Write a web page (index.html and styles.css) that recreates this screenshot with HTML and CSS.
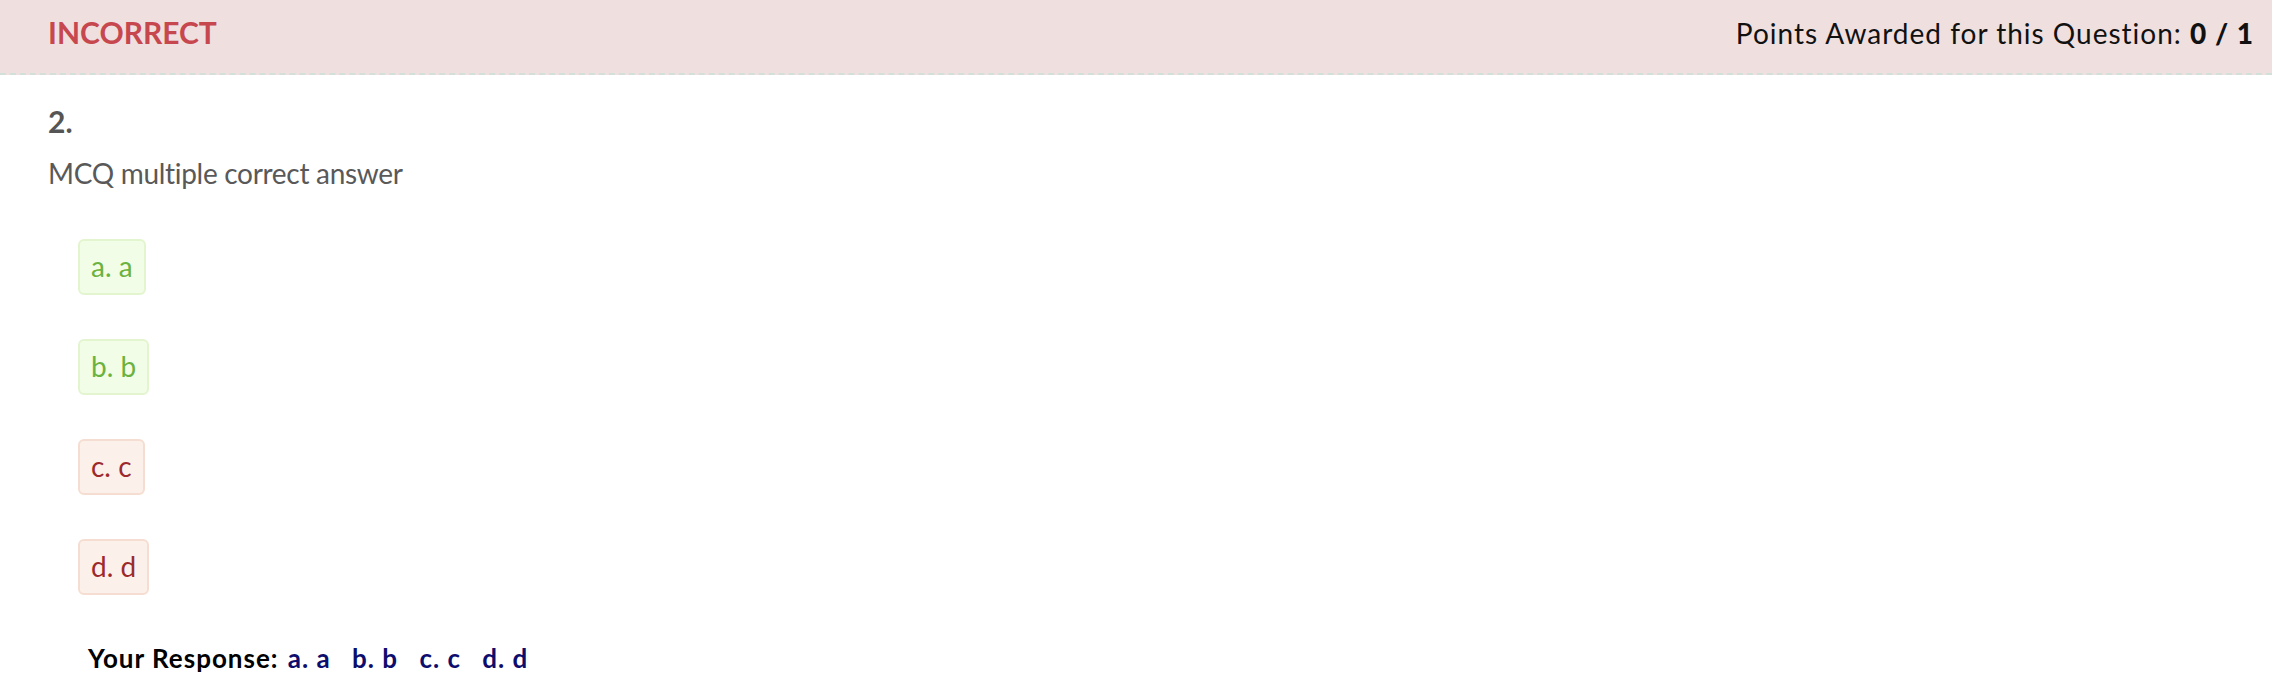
FILE: index.html
```html
<!DOCTYPE html>
<html lang="en">
<head>
  <meta charset="UTF-8" />
  <meta name="viewport" content="width=device-width, initial-scale=1" />
  <title>Question 2 - Result</title>
  <link rel="stylesheet" href="styles.css">
</head>
<body>

  <div class="result-bar">
    <span class="status">INCORRECT</span>
    <span class="points">Points Awarded for this Question: <b>0 / 1</b></span>
  </div>

  <div class="question">
    <div class="nomor">2.</div>
    <p class="teks">MCQ multiple correct answer</p>

    <ul class="pilihan">
      <li class="opsi benar">a. a</li>
      <li class="opsi benar">b. b</li>
      <li class="opsi salah">c. c</li>
      <li class="opsi salah">d. d</li>
    </ul>

    <div class="jawaban">
      <span class="label">Your Response:</span>
      <span class="resp">a. a</span>
      <span class="resp">b. b</span>
      <span class="resp">c. c</span>
      <span class="resp">d. d</span>
    </div>
  </div>

</body>
</html>
```

FILE: styles.css
```css
* {
  box-sizing: border-box;
}
body {
  font-family: Lato, 'Liberation Sans', sans-serif;
  margin: 0;
  background-color: #ffffff;
  color: #555555;
}

.result-bar {
  background-color: #efdfdf;
  border-bottom: 2px dashed #d3e0da;
  padding: 14px 18px 22px 48px;
  display: flex;
  justify-content: space-between;
  align-items: baseline;
  line-height: 36px;
}
.result-bar .status {
  color: #c7474f;
  font-size: 30px;
  font-weight: bold;
}
.result-bar .points {
  color: #111;
  font-size: 28px;
  letter-spacing: 1px;
}
.result-bar .points b {
  font-weight: 900;
}

.question {
  padding: 28px 48px 0;
}
.nomor {
  font-size: 30px;
  font-weight: bold;
  line-height: 36px;
  color: #555;
}
.teks {
  font-size: 28px;
  line-height: 36px;
  margin: 16px 0 0;
  color: #595959;
  letter-spacing: -0.3px;
}

.pilihan {
  list-style: none;
  margin: 48px 0 0;
  padding-left: 30px;
  display: flex;
  flex-direction: column;
  align-items: flex-start;
  gap: 44px;
}
.opsi {
  font-size: 28px;
  line-height: 36px;
  padding: 7px 11px 9px;
  border: 2px solid;
  border-radius: 6px;
}
.opsi.benar {
  background-color: #f2fde7;
  border-color: #e3f5cf;
  color: #6cb23f;
}
.opsi.salah {
  background-color: #fcf1ea;
  border-color: #f6ddd1;
  color: #9c2a2c;
}

.jawaban {
  margin: 47px 0 0 40px;
  font-size: 26px;
  line-height: 32px;
  font-weight: bold;
  letter-spacing: 1px;
}
.jawaban .label {
  color: #000;
  margin-right: 2px;
}
.jawaban .resp {
  color: #0d0d6e;
  margin-right: 14px;
}
```
